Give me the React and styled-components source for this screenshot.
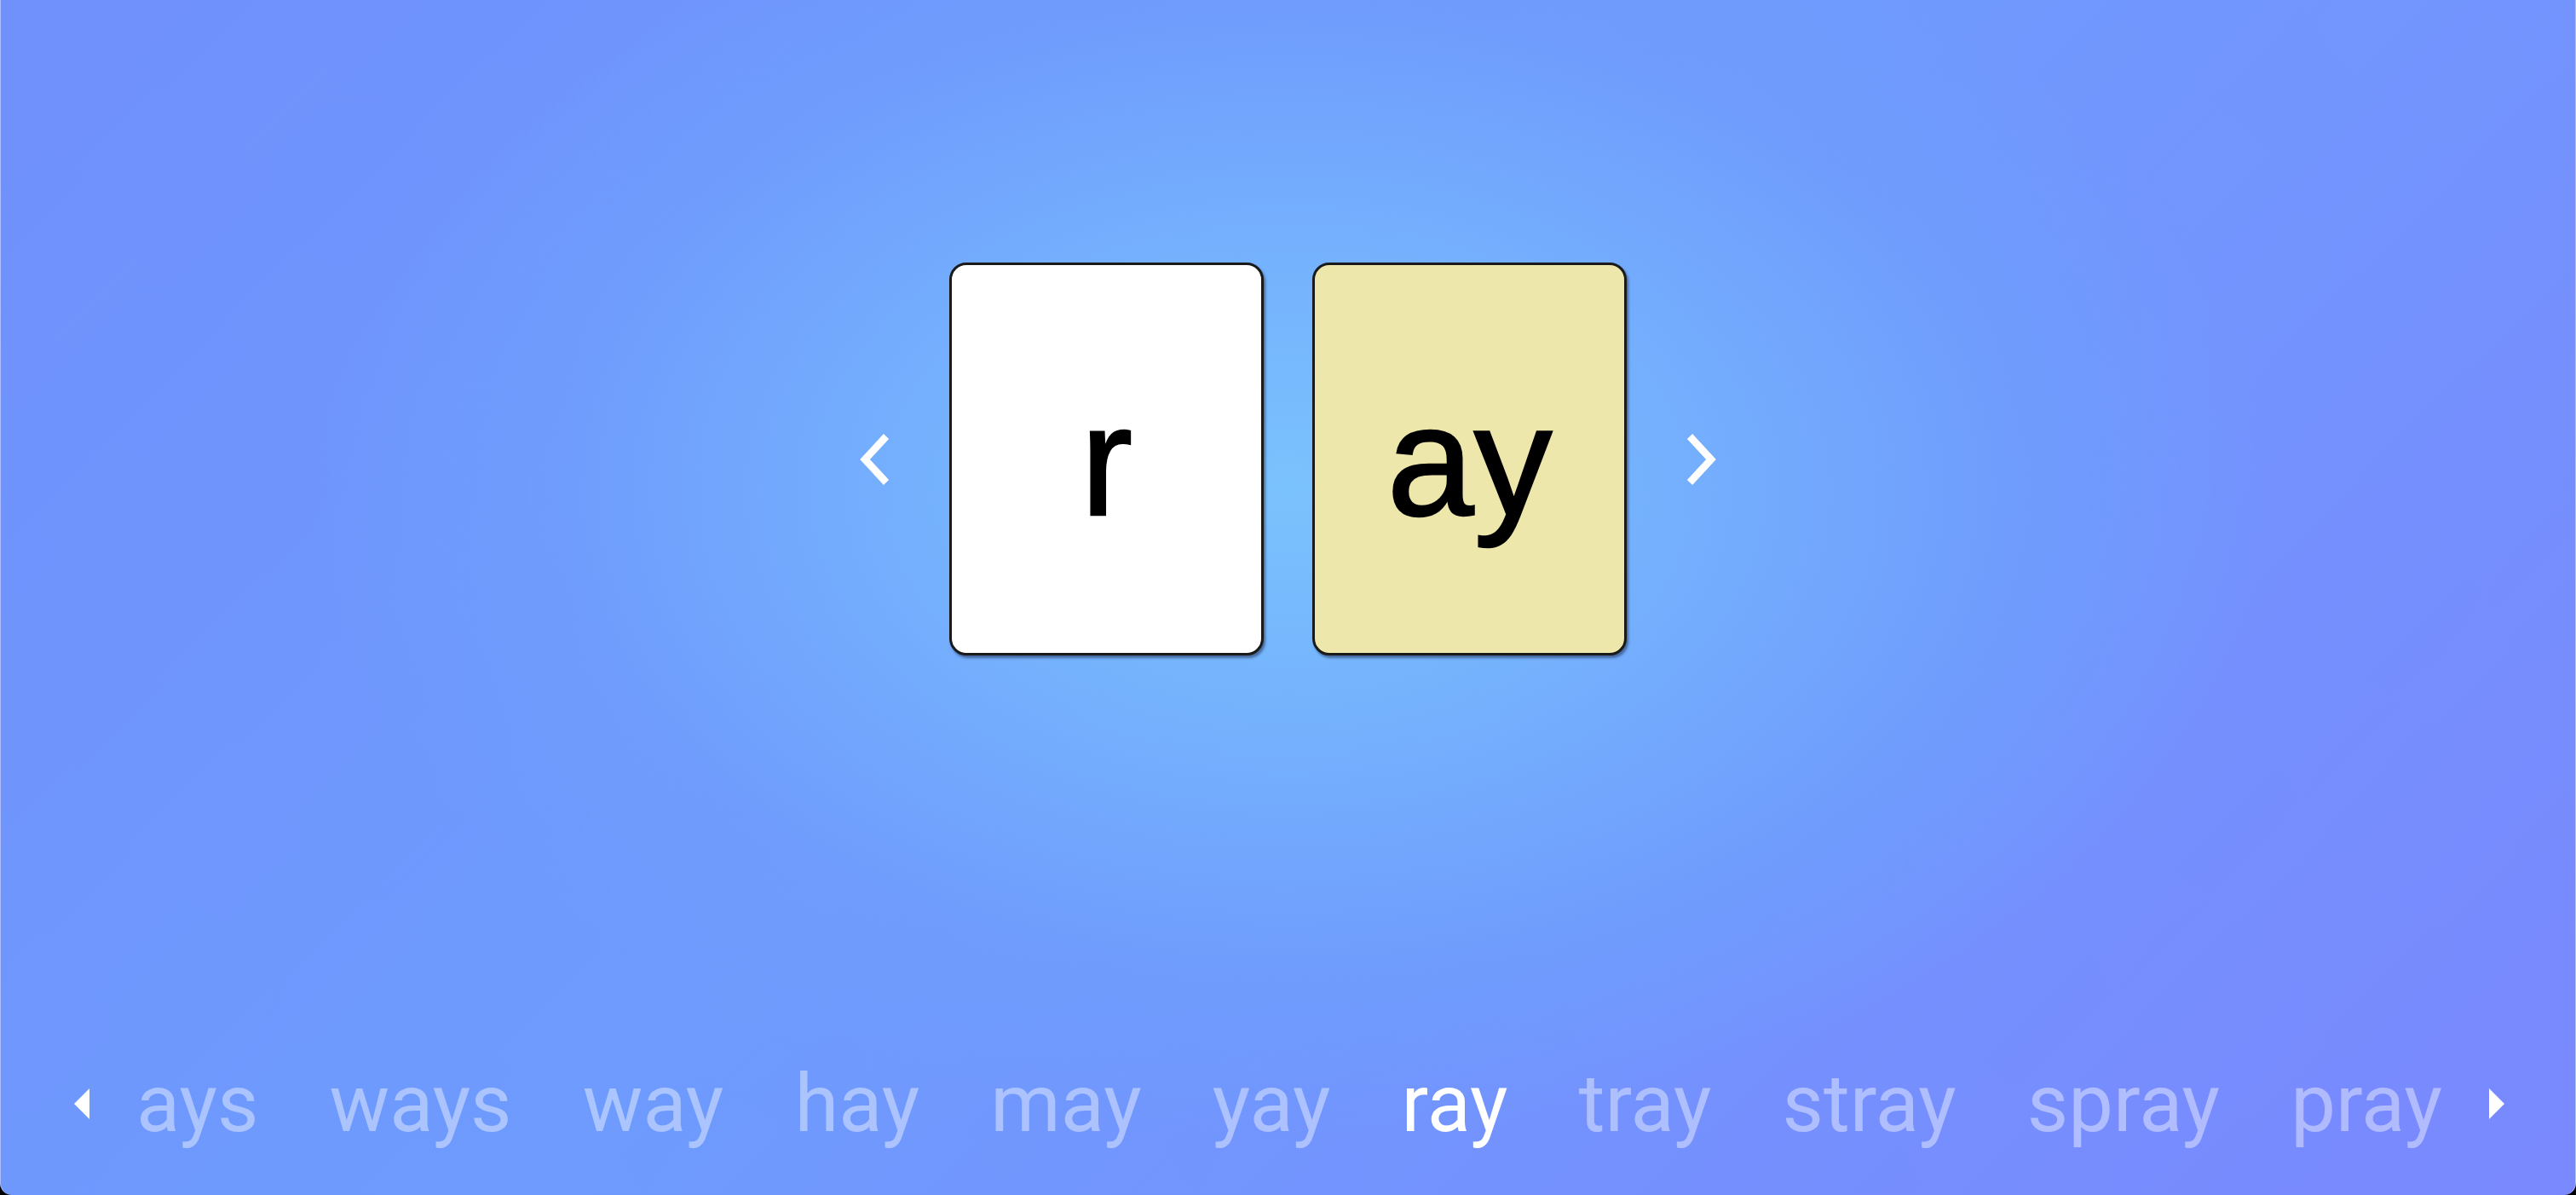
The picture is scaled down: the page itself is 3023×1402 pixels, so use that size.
import React, { useState } from 'react';
import styled, { createGlobalStyle } from 'styled-components';

const GlobalStyle = createGlobalStyle`
  html, body {
    margin: 0;
    padding: 0;
    background: #000;
  }
  * {
    box-sizing: border-box;
  }
`;

const words = ['ays', 'ways', 'way', 'hay', 'may', 'yay', 'ray', 'tray', 'stray', 'spray', 'pray'];

const splitWord = word => {
  const rime = 'ay';
  const idx = word.indexOf(rime);
  return [word.slice(0, idx), word.slice(idx)];
};

const Chevron = ({ dir }) => (
  <svg width="36" height="62" viewBox="0 0 36 62">
    {dir === 'left' ? (
      <polyline points="31,4 6,31 31,58" fill="none" stroke="#fff" strokeWidth="8.5" />
    ) : (
      <polyline points="5,4 30,31 5,58" fill="none" stroke="#fff" strokeWidth="8.5" />
    )}
  </svg>
);

const Caret = ({ dir }) => (
  <svg width="20" height="36" viewBox="0 0 20 36">
    {dir === 'left' ? (
      <polygon points="19,0 19,36 1,18" fill="#fff" />
    ) : (
      <polygon points="1,0 1,36 19,18" fill="#fff" />
    )}
  </svg>
);

const App = () => {
  const [active, setActive] = useState(6);
  const [onset, rime] = splitWord(words[active]);

  const prev = () => setActive(a => Math.max(0, a - 1));
  const next = () => setActive(a => Math.min(words.length - 1, a + 1));

  return (
    <>
      <GlobalStyle />
      <Panel>
        <Stage>
          <NavButton onClick={prev}>
            <Chevron dir="left" />
          </NavButton>
          <Cards>
            <Card>{onset}</Card>
            <Card rime>{rime}</Card>
          </Cards>
          <NavButton onClick={next}>
            <Chevron dir="right" />
          </NavButton>
        </Stage>
        <Strip>
          <CaretButton onClick={prev}>
            <Caret dir="left" />
          </CaretButton>
          <WordList>
            {words.map((w, i) => (
              <Word key={w} active={i === active} onClick={() => setActive(i)}>
                {w}
              </Word>
            ))}
          </WordList>
          <CaretButton onClick={next}>
            <Caret dir="right" />
          </CaretButton>
        </Strip>
      </Panel>
    </>
  );
};

const Panel = styled.div`
  width: 100vw;
  height: 100vh;
  display: flex;
  flex-direction: column;
  border-left: 1px solid rgba(200, 210, 255, 0.7);
  border-right: 1px solid rgba(200, 210, 255, 0.7);
  border-radius: 0 0 14px 14px;
  overflow: hidden;
  background:
    radial-gradient(ellipse 1150px 760px at 50% 41%, #7ac2fd 0%, #75b2fd 35%, #6f9cfd 75%, rgba(111, 148, 253, 0) 100%),
    linear-gradient(135deg, #7090fc 0%, #6e9bfd 45%, #7a88fe 100%);
`;

const Stage = styled.div`
  flex: 1;
  display: flex;
  justify-content: center;
  align-items: center;
  padding-bottom: 145px;
`;

const NavButton = styled.button`
  background: none;
  border: none;
  padding: 0;
  margin: 0 69px;
  display: flex;
  cursor: pointer;
`;

const Cards = styled.div`
  display: flex;
  gap: 57px;
`;

const Card = styled.div`
  width: 369px;
  height: 461px;
  border: 3px solid #1a1a1a;
  border-radius: 20px;
  background: ${props => (props.rime ? '#ede7ab' : '#fff')};
  box-shadow: 2px 3px 3px rgba(20, 30, 60, 0.5);
  display: flex;
  justify-content: center;
  align-items: center;
  font-family: 'Liberation Sans', Arial, sans-serif;
  font-size: 183px;
  color: #000;
  -webkit-text-stroke: 2.5px #000;
  padding-top: 4px;
`;

const Strip = styled.div`
  height: 180px;
  display: flex;
  align-items: center;
  padding: 0 82px 34px 85px;
`;

const CaretButton = styled.button`
  background: none;
  border: none;
  padding: 0;
  display: flex;
  cursor: pointer;
`;

const WordList = styled.div`
  flex: 1;
  display: flex;
  justify-content: space-between;
  margin: 0 54px;
`;

const Word = styled.span`
  font-family: Roboto, 'Liberation Sans', sans-serif;
  font-size: 94px;
  line-height: 1;
  color: ${props => (props.active ? '#fff' : 'rgba(255, 255, 255, 0.42)')};
  cursor: pointer;
`;

export default App;
